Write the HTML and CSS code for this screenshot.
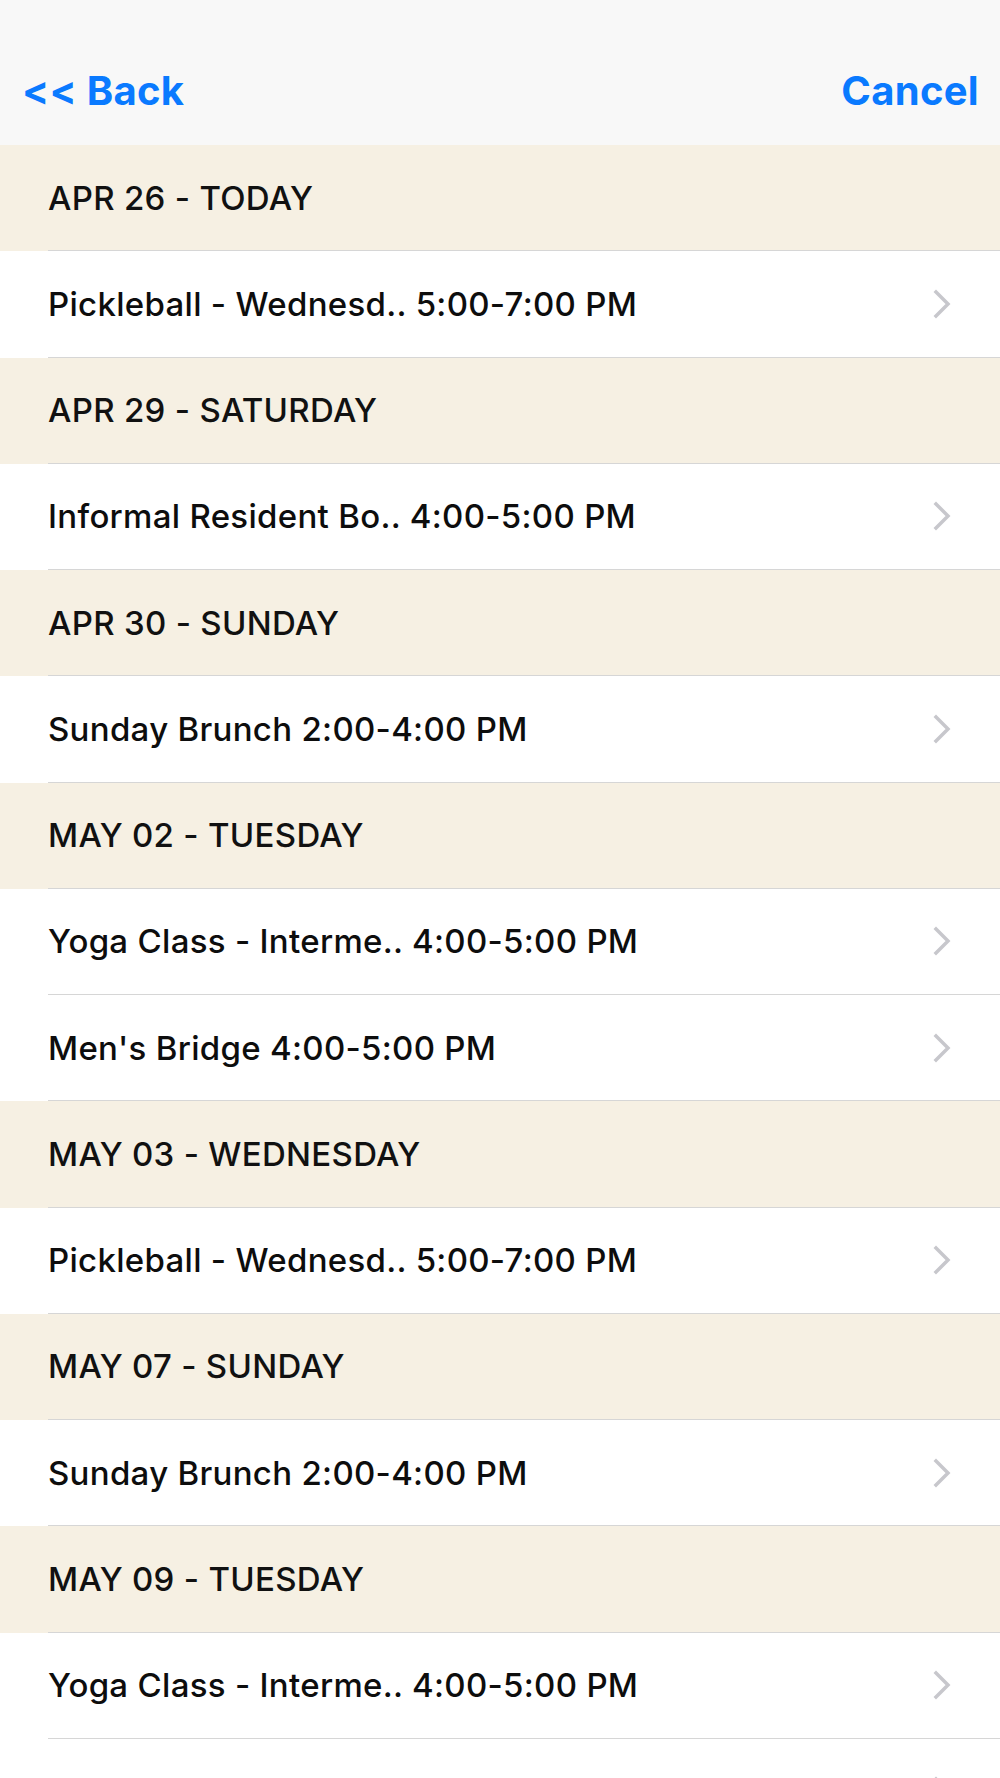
FILE: index.html
```html
<!DOCTYPE html>
<html>
<head>
<meta charset="utf-8">
<link rel="stylesheet" href="styles.css">
</head>
<body>
<div class="nav">
  <span class="nav-btn">&lt;&lt; Back</span>
  <span class="nav-btn">Cancel</span>
</div>
<div class="list">
  <div class="row section"><div class="inner"><span class="label">APR 26 - TODAY</span></div></div>
  <div class="row item"><div class="inner"><span class="label">Pickleball - Wednesd.. 5:00-7:00 PM</span><svg class="chev" viewBox="0 0 18 30"><path d="M3 3 L15 15 L3 27" /></svg></div></div>
  <div class="row section"><div class="inner"><span class="label">APR 29 - SATURDAY</span></div></div>
  <div class="row item"><div class="inner"><span class="label">Informal Resident Bo.. 4:00-5:00 PM</span><svg class="chev" viewBox="0 0 18 30"><path d="M3 3 L15 15 L3 27" /></svg></div></div>
  <div class="row section"><div class="inner"><span class="label">APR 30 - SUNDAY</span></div></div>
  <div class="row item"><div class="inner"><span class="label">Sunday Brunch 2:00-4:00 PM</span><svg class="chev" viewBox="0 0 18 30"><path d="M3 3 L15 15 L3 27" /></svg></div></div>
  <div class="row section"><div class="inner"><span class="label">MAY 02 - TUESDAY</span></div></div>
  <div class="row item"><div class="inner"><span class="label">Yoga Class - Interme.. 4:00-5:00 PM</span><svg class="chev" viewBox="0 0 18 30"><path d="M3 3 L15 15 L3 27" /></svg></div></div>
  <div class="row item"><div class="inner"><span class="label">Men's Bridge 4:00-5:00 PM</span><svg class="chev" viewBox="0 0 18 30"><path d="M3 3 L15 15 L3 27" /></svg></div></div>
  <div class="row section"><div class="inner"><span class="label">MAY 03 - WEDNESDAY</span></div></div>
  <div class="row item"><div class="inner"><span class="label">Pickleball - Wednesd.. 5:00-7:00 PM</span><svg class="chev" viewBox="0 0 18 30"><path d="M3 3 L15 15 L3 27" /></svg></div></div>
  <div class="row section"><div class="inner"><span class="label">MAY 07 - SUNDAY</span></div></div>
  <div class="row item"><div class="inner"><span class="label">Sunday Brunch 2:00-4:00 PM</span><svg class="chev" viewBox="0 0 18 30"><path d="M3 3 L15 15 L3 27" /></svg></div></div>
  <div class="row section"><div class="inner"><span class="label">MAY 09 - TUESDAY</span></div></div>
  <div class="row item"><div class="inner"><span class="label">Yoga Class - Interme.. 4:00-5:00 PM</span><svg class="chev" viewBox="0 0 18 30"><path d="M3 3 L15 15 L3 27" /></svg></div></div>
  <div class="row item"><div class="inner"><span class="label"></span><svg class="chev" viewBox="0 0 18 30"><path d="M3 3 L15 15 L3 27" /></svg></div></div>
</div>
</body>
</html>
```

FILE: styles.css
```css
html, body {
  margin: 0;
  padding: 0;
  background: #ffffff;
}
body {
  font-family: Inter, "Noto Sans", "Liberation Sans", sans-serif;
  overflow: hidden;
  height: 1778px;
}
.nav {
  height: 145px;
  background: #f8f8f8;
  display: flex;
  justify-content: space-between;
  align-items: flex-start;
  padding: 66px 21px 0 22px;
  box-sizing: border-box;
}
.nav-btn {
  color: #0a7aff;
  font-weight: 700;
  font-size: 40px;
  line-height: 50px;
  letter-spacing: 0.3px;
}
.list {
  display: flex;
  flex-direction: column;
}
.row {
  padding-left: 48px;
}
.section {
  background: #f6f0e3;
}
.item {
  background: #ffffff;
}
.inner {
  height: 105.25px;
  border-bottom: 1px solid #d6d6d6;
  display: flex;
  align-items: center;
  justify-content: space-between;
  padding-right: 49px;
}
.label {
  font-size: 33px;
  font-weight: 500;
  color: #0d0d0d;
  letter-spacing: 0.3px;
}
.section .label {
  color: #111111;
}
.chev {
  width: 18px;
  height: 30px;
  flex: none;
}
.chev path {
  fill: none;
  stroke: #c7c7cc;
  stroke-width: 3.5;
  stroke-linecap: square;
  stroke-linejoin: miter;
}
```
